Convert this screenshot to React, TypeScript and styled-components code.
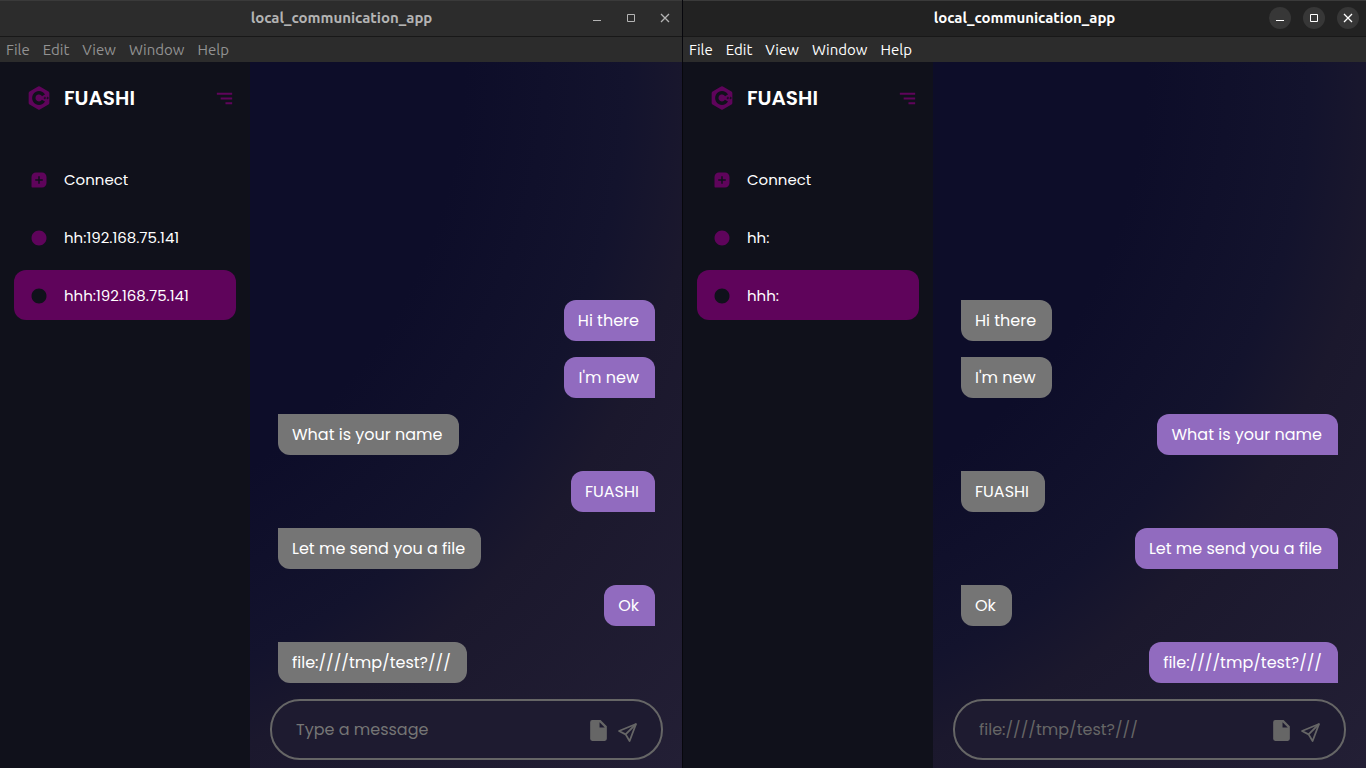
import React from "react";
import styled, { createGlobalStyle, css } from "styled-components";
import {
  BiLogoCPlusPlus,
  BiMenuAltRight,
  BiSolidMessageSquareAdd,
  BiSolidCircle,
  BiSolidFileBlank,
} from "react-icons/bi";

const GlobalStyle = createGlobalStyle`
  * { box-sizing: border-box; margin: 0; padding: 0; }
  body { background: #10111b; font-family: Poppins, Inter, "Liberation Sans", sans-serif; }
  button { font: inherit; color: inherit; background: none; border: 0; cursor: pointer; }
`;

const Desktop = styled.div`
  display: grid;
  grid-template-columns: 1fr 1fr;
  min-height: 100vh;
`;

const Window = styled.section<{ $active: boolean }>`
  position: relative;
  display: flex;
  flex-direction: column;
  min-width: 0;
  ${(p) =>
    !p.$active &&
    css`
      &::after {
        content: "";
        position: absolute;
        inset: 0 0 0 auto;
        width: 1px;
        background: #07070c;
      }
    `}
`;

const TitleBar = styled.header<{ $active: boolean }>`
  display: grid;
  grid-template-columns: 1fr auto 1fr;
  align-items: center;
  height: 37px;
  padding: 0 7px 1px;
  border-top: 1px solid #3a3a3a;
  border-bottom: 1px solid #181818;
  background: ${(p) => (p.$active ? "#222222" : "#2c2c2c")};
  color: ${(p) => (p.$active ? "#ffffff" : "#b4b4b4")};
`;

const Title = styled.h1`
  grid-column: 2;
  font: 700 15px/20px Ubuntu, "Noto Sans", sans-serif;
`;

const WindowControls = styled.div`
  display: flex;
  justify-content: flex-end;
  gap: 12px;
`;

const WindowButton = styled.button<{ $active: boolean }>`
  display: grid;
  place-items: center;
  width: 22px;
  height: 22px;
  border-radius: 50%;
  background: ${(p) => (p.$active ? "#373737" : "transparent")};
`;

const MenuBar = styled.nav<{ $active: boolean }>`
  display: flex;
  align-items: center;
  gap: 13px;
  height: 25px;
  padding: 0 6px;
  background: #2c2c2c;
  color: ${(p) => (p.$active ? "#ffffff" : "#929292")};
  font: 400 15px/20px Ubuntu, "Noto Sans", sans-serif;
`;

const Body = styled.div`
  flex: 1;
  display: grid;
  grid-template-columns: 250px 1fr;
  background: radial-gradient(at top left, #0d0d29 0%, #0d0d29 48%, #13132d 65%, #1b182d 73%, #231f35 100%);
`;

const Sidebar = styled.aside`
  display: flex;
  flex-direction: column;
  gap: 26px;
  padding: 6px 14px;
  background: #10111b;
`;

const Brand = styled.div`
  display: grid;
  grid-template-columns: 50px 1fr 50px;
  align-items: center;
  height: 60px;
  color: #5f045b;
`;

const BrandIcon = styled.span`
  display: grid;
  place-items: center;
`;

const BrandName = styled.h2`
  color: #ffffff;
  font-size: 20px;
  font-weight: 600;
  line-height: 30px;
`;

const Toggle = styled.button`
  display: grid;
  place-items: center end;
`;

const Contacts = styled.ul`
  display: flex;
  flex-direction: column;
  gap: 8px;
  list-style: none;
`;

const Contact = styled.button<{ $selected?: boolean }>`
  display: grid;
  grid-template-columns: 50px 1fr;
  align-items: center;
  width: 100%;
  height: 50px;
  padding-top: 1px;
  border-radius: 12px;
  background: ${(p) => (p.$selected ? "#5f045b" : "transparent")};
  color: ${(p) => (p.$selected ? "#10111b" : "#5f045b")};
  text-align: left;

  svg { justify-self: center; }
`;

const ContactName = styled.span`
  color: #ffffff;
  font-size: 15px;
  line-height: 24px;
`;

const Chat = styled.main`
  display: flex;
  flex-direction: column;
  justify-content: flex-end;
  gap: 16px;
  min-width: 0;
  padding: 16px 20px 8px;
`;

const Messages = styled.ol`
  display: flex;
  flex-direction: column;
  align-items: flex-start;
  gap: 16px;
  padding: 0 8px;
  list-style: none;
`;

const Bubble = styled.li<{ $own: boolean }>`
  align-self: ${(p) => (p.$own ? "flex-end" : "flex-start")};
  padding: 9px 16px 8px 14px;
  border-radius: ${(p) => (p.$own ? "12px 12px 0 12px" : "0 12px 12px 12px")};
  background: ${(p) => (p.$own ? "#916bbf" : "#757575")};
  color: #ffffff;
  font-size: 16px;
  line-height: 24px;
`;

const Composer = styled.form`
  display: flex;
  align-items: center;
  gap: 4px;
  height: 61px;
  padding: 0 22px 0 24px;
  border: 2px solid #666666;
  border-radius: 30px;
  background: #1e1b30;
  color: #666666;
`;

const MessageInput = styled.input`
  flex: 1;
  min-width: 0;
  border: 0;
  outline: 0;
  background: transparent;
  color: #666666;
  font: inherit;
  font-size: 16px;
  line-height: 24px;

  &::placeholder { color: #757575; opacity: 1; }
`;

const ComposerButton = styled.button`
  display: grid;
  place-items: center;
  padding-top: 2px;
`;

const SendIcon = () => (
  <svg width="24" height="24" viewBox="0 0 24 24" fill="none" stroke="currentColor" strokeWidth="1.8" strokeLinejoin="round" aria-hidden="true">
    <path d="M21 5 L4 12 L10.6 15.4 L14.6 22 Z" />
    <path d="M21 5 L10.6 15.4" />
  </svg>
);

const MENUS = ["File", "Edit", "View", "Window", "Help"];

const CONVERSATION = [
  { from: "left", text: "Hi there" },
  { from: "left", text: "I'm new" },
  { from: "right", text: "What is your name" },
  { from: "left", text: "FUASHI" },
  { from: "right", text: "Let me send you a file" },
  { from: "left", text: "Ok" },
  { from: "right", text: "file:////tmp/test?///" },
];

type AppWindowProps = {
  side: "left" | "right";
  active: boolean;
  contacts: string[];
  draft?: string;
};

const AppWindow = ({ side, active, contacts, draft }: AppWindowProps) => (
  <Window $active={active}>
    <TitleBar $active={active}>
      <Title>local_communication_app</Title>
      <WindowControls>
        <WindowButton $active={active} aria-label="Minimize">
          <svg width="10" height="10" stroke="currentColor" aria-hidden="true"><path d="M1 7.5h8" /></svg>
        </WindowButton>
        <WindowButton $active={active} aria-label="Maximize">
          <svg width="10" height="10" fill="none" stroke="currentColor" aria-hidden="true"><path d="M1.5 1.5h7v7h-7z" /></svg>
        </WindowButton>
        <WindowButton $active={active} aria-label="Close">
          <svg width="10" height="10" stroke="currentColor" strokeWidth="1.3" aria-hidden="true"><path d="M1 1l8 8M9 1l-8 8" /></svg>
        </WindowButton>
      </WindowControls>
    </TitleBar>
    <MenuBar $active={active}>
      {MENUS.map((m) => <button key={m}>{m}</button>)}
    </MenuBar>
    <Body>
      <Sidebar>
        <Brand>
          <BrandIcon><BiLogoCPlusPlus size={28} /></BrandIcon>
          <BrandName>FUASHI</BrandName>
          <Toggle aria-label="Toggle sidebar"><BiMenuAltRight size={23} /></Toggle>
        </Brand>
        <Contacts>
          <li>
            <Contact><BiSolidMessageSquareAdd size={18} /><ContactName>Connect</ContactName></Contact>
          </li>
          {contacts.map((name, i) => (
            <li key={name}>
              <Contact $selected={i === contacts.length - 1}>
                <BiSolidCircle size={18} /><ContactName>{name}</ContactName>
              </Contact>
            </li>
          ))}
        </Contacts>
      </Sidebar>
      <Chat>
        <Messages>
          {CONVERSATION.map((m) => <Bubble key={m.text} $own={m.from === side}>{m.text}</Bubble>)}
        </Messages>
        <Composer onSubmit={(e) => e.preventDefault()}>
          <MessageInput aria-label="Message" placeholder="Type a message" defaultValue={draft} />
          <ComposerButton type="button" aria-label="Attach file"><BiSolidFileBlank size={25} /></ComposerButton>
          <ComposerButton type="submit" aria-label="Send"><SendIcon /></ComposerButton>
        </Composer>
      </Chat>
    </Body>
  </Window>
);

export default function App() {
  return (
    <>
      <GlobalStyle />
      <Desktop>
        <AppWindow side="left" active={false} contacts={["hh:192.168.75.141", "hhh:192.168.75.141"]} />
        <AppWindow side="right" active contacts={["hh:", "hhh:"]} draft="file:////tmp/test?///" />
      </Desktop>
    </>
  );
}
